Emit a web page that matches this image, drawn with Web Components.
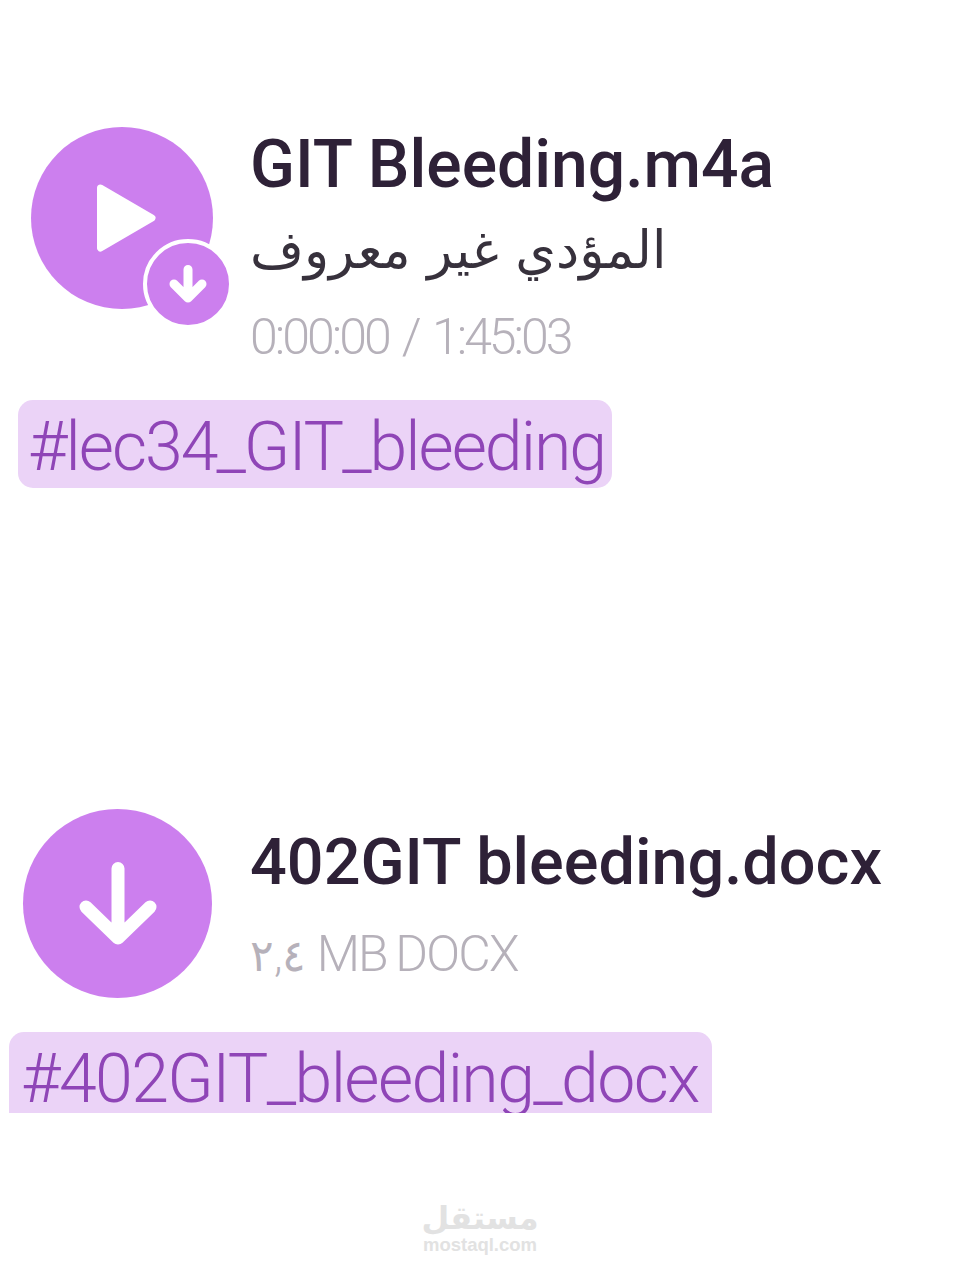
<!DOCTYPE html>
<html lang="ar">
<head>
<meta charset="utf-8">
<title>Files</title>
<style>
  html, body { margin: 0; background: #fff; }
  body { width: 960px; height: 1280px; overflow: hidden; font-family: Roboto, "DejaVu Sans", sans-serif; }
  .page { display: flex; flex-direction: column; }
  #first { margin: 122px 0 0 18px; --button-top: 5px; --text-top: 0px; --tag-top: 18px; --title-size: 66px; }
  #second { margin: 321px 0 0 9px; --button-top: 0px; --text-top: 10px; --meta-top: 4px; --tag-top: 31px; --title-size: 64.8px; }
  mostaql-mark { margin-top: 87px; }
</style>
</head>
<body>
<div class="page">
  <media-message id="first" inset="13" gap="37">
    <round-button slot="button" kind="play" badge></round-button>
    <span slot="title">GIT Bleeding.m4a</span>
    <span slot="subtitle" dir="rtl">المؤدي غير معروف</span>
    <span slot="meta" style="letter-spacing:-3px;word-spacing:4px">0:00:00 / 1:45:03</span>
    <hash-tag slot="tag" height="88" pad="10 7" spacing="-2" radius="15px">#lec34_GIT_bleeding</hash-tag>
  </media-message>
  <media-message id="second" inset="14" gap="38">
    <round-button slot="button" kind="download"></round-button>
    <span slot="title">402GIT bleeding.docx</span>
    <span slot="meta" style="letter-spacing:-1.8px;word-spacing:-2px"><span dir="rtl" style="font-size:44px;letter-spacing:0">٢,٤</span> MB DOCX</span>
    <hash-tag slot="tag" height="81" pad="12 13" spacing="-1.6" radius="15px 15px 0 0">#402GIT_bleeding_docx</hash-tag>
  </media-message>
  <mostaql-mark></mostaql-mark>
</div>

<script>
class RoundButton extends HTMLElement {
  constructor() {
    super();
    this.attachShadow({ mode: 'open' });
    const play = this.getAttribute('kind') === 'play';
    const size = play ? 182 : 189;
    const glyph = play
      ? `<svg class="glyph" width="182" height="182" viewBox="0 0 182 182"><path d="M69.500 61 L121 91 L69.500 121 Z" fill="#fff" stroke="#fff" stroke-width="7" stroke-linejoin="round"/></svg>`
      : `<svg class="glyph" width="189" height="189" viewBox="0 0 189 189"><path d="M95 59.500 V128 M63 98 L95 129 L127 98" fill="none" stroke="#fff" stroke-width="13" stroke-linecap="round" stroke-linejoin="round"/></svg>`;
    const badge = this.hasAttribute('badge')
      ? `<span class="badge"><svg width="82" height="82" viewBox="0 0 82 82"><path d="M41 26.500 V54 M27 41 L41 55 L55 41" fill="none" stroke="#fff" stroke-width="9" stroke-linecap="round" stroke-linejoin="round"/></svg></span>`
      : '';
    this.shadowRoot.innerHTML = `
      <style>
        :host {
          display: block;
          position: relative;
          flex: none;
          width: ${size}px;
          height: ${size}px;
          margin-top: var(--button-top, 0);
          border-radius: 50%;
          background: #cc7fee;
        }
        .glyph { display: block; }
        .badge {
          position: absolute;
          left: 112px;
          top: 112px;
          width: 82px;
          height: 82px;
          border: 4px solid #fff;
          border-radius: 50%;
          background: #cc7fee;
        }
        .badge svg { display: block; }
      </style>
      ${glyph}${badge}
    `;
  }
}

class HashTag extends HTMLElement {
  constructor() {
    super();
    this.attachShadow({ mode: 'open' });
    const [left, right] = this.getAttribute('pad').split(' ');
    this.shadowRoot.innerHTML = `
      <style>
        :host {
          display: block;
          width: fit-content;
          height: ${this.getAttribute('height')}px;
          overflow: hidden;
          padding: 0 ${right}px 0 ${left}px;
          border-radius: ${this.getAttribute('radius')};
          background: #ebd3f7;
          color: #8f45b7;
          font: 300 68px/94px Roboto, sans-serif;
          letter-spacing: ${this.getAttribute('spacing')}px;
          white-space: nowrap;
        }
      </style>
      <slot></slot>
    `;
  }
}

class MediaMessage extends HTMLElement {
  constructor() {
    super();
    this.attachShadow({ mode: 'open' });
    this.shadowRoot.innerHTML = `
      <style>
        :host { display: block; }
        .row {
          display: flex;
          align-items: flex-start;
          gap: ${this.getAttribute('gap')}px;
          padding-left: ${this.getAttribute('inset')}px;
        }
        .text { display: flex; flex-direction: column; padding-top: var(--text-top, 0); }
        .title {
          font: 500 var(--title-size, 66px)/86px Roboto, sans-serif;
          color: #2e2137;
          white-space: nowrap;
        }
        .subtitle {
          font: 400 52px/84px "DejaVu Sans", sans-serif;
          color: #37313c;
          width: fit-content;
          white-space: nowrap;
        }
        .meta {
          font: 300 50px/90px Roboto, "DejaVu Sans", sans-serif;
          color: #b6b1ba;
          margin-top: var(--meta-top, 0);
          white-space: nowrap;
        }
        .tag { margin-top: var(--tag-top, 17px); }
      </style>
      <div class="row">
        <slot name="button"></slot>
        <div class="text">
          <div class="title"><slot name="title"></slot></div>
          <div class="subtitle"><slot name="subtitle"></slot></div>
          <div class="meta"><slot name="meta"></slot></div>
        </div>
      </div>
      <div class="tag"><slot name="tag"></slot></div>
    `;
  }
  connectedCallback() {
    if (!this.querySelector('[slot=subtitle]')) {
      this.shadowRoot.querySelector('.subtitle').style.display = 'none';
    }
  }
}

class MostaqlMark extends HTMLElement {
  constructor() {
    super();
    this.attachShadow({ mode: 'open' });
    this.shadowRoot.innerHTML = `
      <style>
        :host {
          display: flex;
          flex-direction: column;
          align-items: center;
          color: #e2e2e2;
        }
        .ar { font: 700 32px/36px "DejaVu Sans", sans-serif; }
        .en { font: 700 18.5px/18px "Liberation Sans", sans-serif; }
      </style>
      <div class="ar" dir="rtl">مستقل</div>
      <div class="en">mostaql.com</div>
    `;
  }
}

customElements.define('round-button', RoundButton);
customElements.define('hash-tag', HashTag);
customElements.define('media-message', MediaMessage);
customElements.define('mostaql-mark', MostaqlMark);
</script>
</body>
</html>
